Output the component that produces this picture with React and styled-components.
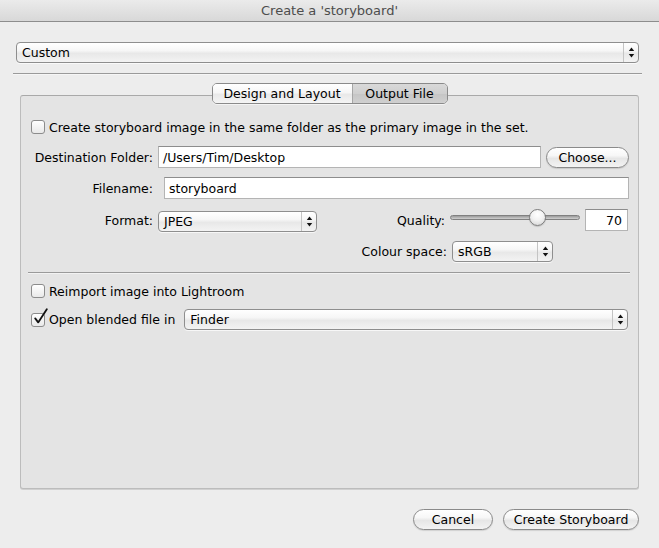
import React from "react";
import styled, { createGlobalStyle } from "styled-components";

const Global = createGlobalStyle`
  html, body { margin: 0; padding: 0; background: #ededed; }
  * { box-sizing: border-box; }
`;

const Window = styled.div`
  width: 659px;
  height: 548px;
  background: #ededed;
  display: flex;
  flex-direction: column;
  font-family: "DejaVu Sans", "Lucida Grande", sans-serif;
  font-size: 12.5px;
  color: #000;
  overflow: hidden;
`;

const TitleBar = styled.div`
  height: 22px;
  flex: none;
  border-bottom: 1px solid #8d8d8d;
  background: linear-gradient(#ebebeb, #d8d8d8);
  display: flex;
  align-items: center;
  justify-content: center;
  color: #4d4d4d;
  font-size: 13px;
`;

const Body = styled.div`
  display: flex;
  flex-direction: column;
  padding: 20px 0 0 0;
`;

const PopupBox = styled.div`
  display: flex;
  align-items: stretch;
  height: ${(p) => p.$h || 21}px;
  width: ${(p) => p.$w}px;
  margin-left: ${(p) => p.$ml || 0}px;
  margin-top: ${(p) => p.$mt || 0}px;
  border: 1px solid #8e8e8e;
  border-radius: 4px;
  background: linear-gradient(#ffffff 0%, #f6f6f6 40%, #e8e8e8 55%, #f3f3f3 100%);
  box-shadow: 0 1px 0 rgba(255, 255, 255, 0.7);
  flex: none;
`;

const PopupText = styled.div`
  flex: 1;
  display: flex;
  align-items: center;
  padding-left: 5px;
  white-space: nowrap;
`;

const PopupArrows = styled.div`
  width: 15px;
  border-left: 1px solid #c4c4c4;
  display: flex;
  align-items: center;
  justify-content: center;
`;

const Arrows = () => (
  <svg width="7" height="11" viewBox="0 0 7 11">
    <path d="M3.5 0.5 L6.2 4 L0.8 4 Z" fill="#111" />
    <path d="M3.5 10.5 L6.2 7 L0.8 7 Z" fill="#111" />
  </svg>
);

const Popup = ({ w, h, ml, mt, children }) => (
  <PopupBox $w={w} $h={h} $ml={ml} $mt={mt}>
    <PopupText>{children}</PopupText>
    <PopupArrows>
      <Arrows />
    </PopupArrows>
  </PopupBox>
);

const Separator = styled.div`
  height: 1px;
  background: #9a9a9a;
  margin: ${(p) => p.$m};
  box-shadow: 0 1px 0 rgba(255, 255, 255, 0.5);
`;

const TabsRow = styled.div`
  display: flex;
  justify-content: center;
  margin-top: 9px;
  margin-bottom: -9px;
  position: relative;
  z-index: 2;
`;

const Segmented = styled.div`
  display: flex;
  height: 21px;
  border: 1px solid #8a8a8a;
  border-radius: 5px;
  overflow: hidden;
  box-shadow: 0 1px 0 rgba(255, 255, 255, 0.6);
`;

const Segment = styled.div`
  width: ${(p) => p.$w}px;
  display: flex;
  align-items: center;
  justify-content: center;
  white-space: nowrap;
  background: ${(p) =>
    p.$active
      ? "linear-gradient(#d9d9d9 0%, #cfcfcf 50%, #c6c6c6 55%, #d0d0d0 100%)"
      : "linear-gradient(#ffffff 0%, #f6f6f6 45%, #e9e9e9 55%, #f4f4f4 100%)"};
  & + & {
    border-left: 1px solid #a6a6a6;
  }
`;

const TabBox = styled.div`
  margin: 0 20px 0 20px;
  height: 394px;
  border: 1px solid #bcbcbc;
  border-top-color: #a9a9a9;
  border-radius: 3px;
  background: #e4e4e4;
  box-shadow: 0 1px 0 #d0d0d0;
  padding: 21px 10px 0 10px;
  display: flex;
  flex-direction: column;
`;

const Row = styled.div`
  display: flex;
  align-items: ${(p) => p.$align || "center"};
  height: ${(p) => p.$h}px;
  margin-top: ${(p) => p.$mt || 0}px;
`;

const Label = styled.div`
  width: ${(p) => p.$w}px;
  flex: none;
  text-align: right;
  white-space: nowrap;
  margin-top: ${(p) => p.$mt || 0}px;
`;

const Text = styled.span`
  white-space: nowrap;
  margin-left: ${(p) => p.$ml || 0}px;
`;

const CheckWrap = styled.div`
  position: relative;
  width: 14px;
  height: 14px;
  flex: none;
  border: 1px solid #8c8c8c;
  border-radius: 3px;
  background: linear-gradient(#ffffff, #e9e9e9);
  margin-right: 4px;
  & > svg {
    position: absolute;
    left: 1px;
    top: -6px;
  }
`;

const CheckBox = ({ checked }) => (
  <CheckWrap>
    {checked && (
      <svg width="15" height="17" viewBox="0 0 15 17">
        <path
          d="M2.2 10.4 L5.2 14.4 L13.8 1.2"
          fill="none"
          stroke="#111"
          strokeWidth="1.8"
          strokeLinecap="round"
          strokeLinejoin="round"
        />
      </svg>
    )}
  </CheckWrap>
);

const Input = styled.div`
  width: ${(p) => p.$w}px;
  height: ${(p) => p.$h || 22}px;
  margin-left: ${(p) => p.$ml || 0}px;
  margin-top: ${(p) => p.$mt || 0}px;
  flex: none;
  background: #fff;
  border: 1px solid #b4b4b4;
  border-top-color: #8d8d8d;
  display: flex;
  align-items: center;
  justify-content: ${(p) => (p.$right ? "flex-end" : "flex-start")};
  padding: 0 5px 0 4px;
  white-space: nowrap;
`;

const PillButton = styled.div`
  width: ${(p) => p.$w}px;
  height: 21px;
  margin-left: ${(p) => p.$ml || 0}px;
  flex: none;
  border: 1px solid #8a8a8a;
  border-radius: 11px;
  background: linear-gradient(#ffffff 0%, #f7f7f7 40%, #e6e6e6 55%, #f3f3f3 100%);
  box-shadow: 0 1px 1px rgba(0, 0, 0, 0.12);
  display: flex;
  align-items: center;
  justify-content: center;
  white-space: nowrap;
`;

const SliderTrack = styled.div`
  position: relative;
  width: 130px;
  height: 5px;
  margin-left: 5px;
  flex: none;
  border: 1px solid #808080;
  border-radius: 3px;
  background: linear-gradient(#9a9a9a, #d0d0d0);
`;

const SliderThumb = styled.div`
  position: absolute;
  top: -7px;
  width: 17px;
  height: 17px;
  border-radius: 50%;
  border: 1px solid #7c7c7c;
  background: radial-gradient(circle at 50% 30%, #ffffff 0%, #f2f2f2 45%, #d2d2d2 100%);
  box-shadow: 0 1px 1px rgba(0, 0, 0, 0.15);
`;

const Slider = ({ value }) => {
  const left = (value / 100) * (130 - 17) - 1;
  return (
    <SliderTrack>
      <SliderThumb style={{ left: `${left}px` }} />
    </SliderTrack>
  );
};

const Footer = styled.div`
  display: flex;
  justify-content: flex-end;
  padding-right: 20px;
  margin-top: 20px;
`;

export default function App() {
  return (
    <>
      <Global />
      <Window>
        <TitleBar>Create a 'storyboard'</TitleBar>
        <Body>
          <Popup w={623} ml={16}>
            Custom
          </Popup>
          <Separator $m="10px 17px 0 13px" />
          <TabsRow>
            <Segmented>
              <Segment $w={139}>Design and Layout</Segment>
              <Segment $w={95} $active>
                Output File
              </Segment>
            </Segmented>
          </TabsRow>
          <TabBox>
            <Row $h={20}>
              <CheckBox />
              <Text>Create storyboard image in the same folder as the primary image in the set.</Text>
            </Row>
            <Row $h={22} $mt={9}>
              <Label $w={122}>Destination Folder:</Label>
              <Input $w={383} $ml={5}>/Users/Tim/Desktop</Input>
              <PillButton $w={83} $ml={5}>Choose...</PillButton>
            </Row>
            <Row $h={22} $mt={9}>
              <Label $w={122}>Filename:</Label>
              <Input $w={465} $ml={11}>storyboard</Input>
            </Row>
            <Row $h={24} $mt={10} $align="flex-start">
              <Label $w={122} $mt={4}>Format:</Label>
              <Popup w={159} ml={5} mt={2}>
                JPEG
              </Popup>
              <Label $w={128} $mt={4}>Quality:</Label>
              <Row $h={17}>
                <Slider value={70} />
              </Row>
              <Input $w={43} $h={22} $ml={5} $right>
                70
              </Input>
            </Row>
            <Row $h={21} $mt={8}>
              <Label $w={416}>Colour space:</Label>
              <Popup w={101} ml={5}>
                sRGB
              </Popup>
            </Row>
            <Separator $m="10px -2px 0 -3px" />
            <Row $h={20} $mt={8}>
              <CheckBox />
              <Text>Reimport image into Lightroom</Text>
            </Row>
            <Row $h={21} $mt={8}>
              <CheckBox checked />
              <Text>Open blended file in</Text>
              <Popup w={444} ml={9}>
                Finder
              </Popup>
            </Row>
          </TabBox>
          <Footer>
            <PillButton $w={80}>Cancel</PillButton>
            <PillButton $w={136} $ml={10}>
              Create Storyboard
            </PillButton>
          </Footer>
        </Body>
      </Window>
    </>
  );
}
